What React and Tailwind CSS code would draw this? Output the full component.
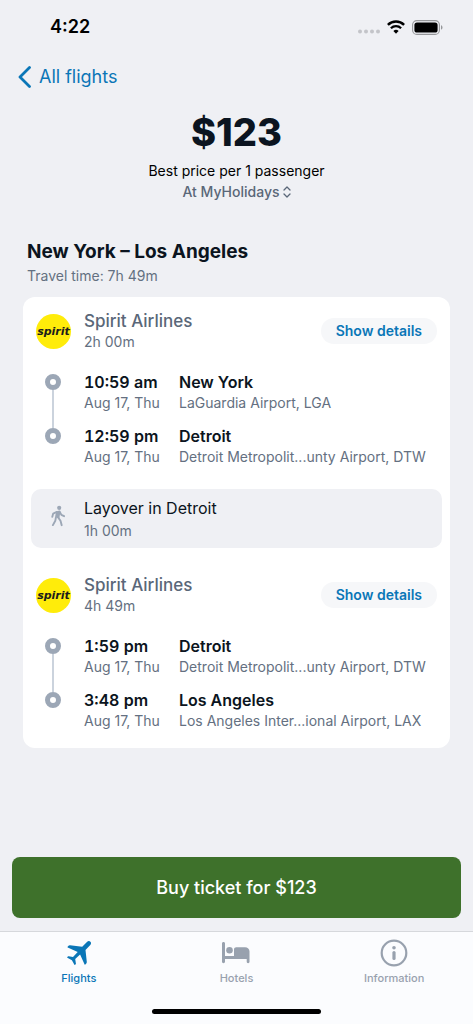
import React from 'react';

const SEGMENTS = [
    {
        airline: 'Spirit Airlines',
        duration: '2h 00m',
        stops: [
            { time: '10:59 am', date: 'Aug 17, Thu', city: 'New York', airport: 'LaGuardia Airport, LGA' },
            { time: '12:59 pm', date: 'Aug 17, Thu', city: 'Detroit', airport: 'Detroit Metropolit...unty Airport, DTW' }
        ]
    },
    {
        airline: 'Spirit Airlines',
        duration: '4h 49m',
        stops: [
            { time: '1:59 pm', date: 'Aug 17, Thu', city: 'Detroit', airport: 'Detroit Metropolit...unty Airport, DTW' },
            { time: '3:48 pm', date: 'Aug 17, Thu', city: 'Los Angeles', airport: 'Los Angeles Inter...ional Airport, LAX' }
        ]
    }
];

function PlaneIcon() {
    return (
        <svg viewBox="0 0 24 24" className="h-6 w-6" fill="currentColor" aria-hidden="true">
            <path d="M23.400.7c-.9-.9-2.300-.8-3.200.1l-5 4.900L3 4.300c-.6-.1-1.100.1-1.500.5l-.9.900c-.2.300-.2.600.1.800L10.700 11 6 16.100l-4.300-.8c-.3 0-.6 0-.8.2l-.6.600c-.2.300-.1.600.1.700l4.500 2.500 2.500 4.400c.2.300.5.300.7.100l.6-.6c.2-.2.300-.5.200-.8l-.7-4.300 4.900-4.700 4.500 10c.2.300.5.300.8.100l.9-.9c.4-.4.500-.9.500-1.500L18.500 8.900l4.800-5c.9-.9 1-2.300.1-3.200Z" />
        </svg>
    );
}

function BedIcon() {
    return (
        <svg viewBox="0 0 28 22" className="h-[22px] w-7" fill="currentColor" aria-hidden="true">
            <path d="M1.500 0C2.300 0 3 .6 3 1.400V14h9V7.500c0-1.400 1-2.300 2.300-2.300H23c2.600 0 4.500 1.800 4.500 4.400v10.200c0 .8-.6 1.400-1.400 1.400s-1.400-.6-1.400-1.400V17H3v2.800c0 .8-.7 1.400-1.500 1.400S0 20.600 0 19.800V1.400C0 .6.700 0 1.500 0Z" />
            <circle cx="7.500" cy="8.200" r="3.300" />
        </svg>
    );
}

function InfoIcon() {
    return (
        <svg viewBox="0 0 28 28" className="h-7 w-7" fill="none" aria-hidden="true">
            <circle cx="14" cy="14" r="12.300" stroke="currentColor" strokeWidth="2.200" />
            <circle cx="14" cy="8.700" r="1.800" fill="currentColor" />
            <path d="M14 13.500v6" stroke="currentColor" strokeWidth="3.200" strokeLinecap="round" />
        </svg>
    );
}

function WalkIcon() {
    return (
        <svg viewBox="0 0 14 22" className="h-[22px] w-[14px]" fill="none" stroke="currentColor" strokeLinecap="round" strokeLinejoin="round" aria-hidden="true">
            <circle cx="8.200" cy="2.800" r="2.100" fill="currentColor" stroke="none" />
            <path d="M5.800 7l2.800-.6-.9 6-2.700-.9Z" fill="currentColor" strokeWidth="1.600" />
            <path d="M5.800 6.900L2.200 8.600l-.9 3.200M8.800 7l1.600 2.900 2.700 1.300M4.900 12.500l-.6 3.300-2.400 4.300M7.100 12.400l2.400 3.300 1.200 4.500" strokeWidth="1.900" />
        </svg>
    );
}

function StatusBar() {
    return (
        <div className="flex h-[54px] items-center justify-between pr-[30px] pl-[50px] text-black">
            <span className="text-lg font-semibold">4:22</span>
            <div className="flex items-center">
                <svg viewBox="0 0 22 14" className="mr-[7px] h-[14px] w-[22px]" fill="#c3c4c9" aria-hidden="true">
                    <circle cx="2" cy="11.500" r="2" />
                    <circle cx="8" cy="11.500" r="2" />
                    <circle cx="14" cy="11.500" r="2" />
                    <circle cx="20" cy="11.500" r="2" />
                </svg>
                <svg viewBox="0 0 18 14" className="mr-[7px] h-[14px] w-[18px]" fill="none" stroke="currentColor" aria-hidden="true">
                    <path d="M.9 4.900a11.600 11.600 0 0 1 16.200 0" strokeWidth="2.500" />
                    <path d="M3.900 8.300a7.300 7.300 0 0 1 10.200 0" strokeWidth="2.300" />
                    <path d="M9 13.800l-2.600-2.700a3.700 3.700 0 0 1 5.200 0Z" fill="currentColor" stroke="none" />
                </svg>
                <svg viewBox="0 0 31 15" className="h-[15px] w-[31px]" aria-hidden="true">
                    <rect x=".6" y=".6" width="26.800" height="13.800" rx="4.200" fill="none" stroke="#96979a" strokeWidth="1.100" />
                    <rect x="2.400" y="2.400" width="23.200" height="10.200" rx="2.600" fill="#000" />
                    <path d="M29 5.300c1 .400 1.500 1.200 1.500 2.200s-.5 1.800-1.500 2.200Z" fill="#96979a" />
                </svg>
            </div>
        </div>
    );
}

function AirlineLogo() {
    return (
        <div className="flex h-[35px] w-[35px] items-center justify-center rounded-full bg-[#ffec0a]">
            <span className="font-['DejaVu_Sans',sans-serif] text-[11px] leading-none font-bold text-[#1c1c1c] italic">spirit</span>
        </div>
    );
}

function StopMarker({ last }) {
    return (
        <div className="flex w-[60px] flex-col items-center pt-[3px]">
            <span className="h-4 w-4 shrink-0 rounded-full border-[5px] border-[#9ca7b6]" />
            {!last && <span className="-mb-[3px] w-[2px] flex-1 bg-[#cbd3dd]" />}
        </div>
    );
}

function Segment({ segment }) {
    return (
        <section>
            <div className="grid grid-cols-[61px_1fr_auto] items-center pr-[13px]">
                <div className="pl-[13px]">
                    <AirlineLogo />
                </div>
                <div>
                    <h3 className="text-[17px] leading-[22px] font-medium text-[#5a6778]">{segment.airline}</h3>
                    <p className="text-sm leading-5 text-[#647081]">{segment.duration}</p>
                </div>
                <button type="button" className="h-[26px] rounded-full bg-[#f6f7f9] px-[15px] text-sm font-semibold text-[#0a76b7]">
                    Show details
                </button>
            </div>
            <ol className="mt-[19px]">
                {segment.stops.map((stop, i) => {
                    const last = i === segment.stops.length - 1;
                    return (
                        <li key={stop.time} className="grid grid-cols-[61px_95px_1fr] whitespace-nowrap">
                            <StopMarker last={last} />
                            <div className={last ? '' : 'pb-3'}>
                                <p className="text-base leading-[22px] font-semibold text-[#0b1420] tabular-nums">{stop.time}</p>
                                <p className="text-sm leading-5 text-[#647081]">{stop.date}</p>
                            </div>
                            <div>
                                <p className="text-base leading-[22px] font-semibold text-[#0b1420]">{stop.city}</p>
                                <p className="text-sm leading-5 text-[#647081]">{stop.airport}</p>
                            </div>
                        </li>
                    );
                })}
            </ol>
        </section>
    );
}

const TABS = [
    { label: 'Flights', Icon: PlaneIcon, active: true },
    { label: 'Hotels', Icon: BedIcon },
    { label: 'Information', Icon: InfoIcon }
];

export default function App() {
    return (
        <div className="flex min-h-screen flex-col bg-[#eff0f4] font-['Inter',sans-serif]">
            <StatusBar />

            <nav className="flex px-[18px] pt-[9px]">
                <a href="#flights" className="flex h-7 items-center gap-2 text-lg text-[#0a76b7]">
                    <svg viewBox="0 0 13 22" className="h-[22px] w-[13px]" fill="none" stroke="currentColor" strokeWidth="2.800" strokeLinecap="round" strokeLinejoin="round" aria-hidden="true">
                        <path d="M11.500 1.500L2 11l9.500 9.500" />
                    </svg>
                    All flights
                </a>
            </nav>

            <main className="px-[23px]">
                <header className="pt-[17px] text-center">
                    <h1 className="text-[38px] leading-[48px] font-extrabold text-[#0b1420]">$123</h1>
                    <p className="mt-1 text-sm leading-[22px] text-black">Best price per 1 passenger</p>
                    <button type="button" className="mx-auto flex h-5 items-center gap-[3px] text-sm font-medium text-[#5a6778]">
                        At MyHolidays
                        <svg viewBox="0 0 8 12" className="h-3 w-2" fill="none" stroke="currentColor" strokeWidth="1.300" strokeLinecap="round" strokeLinejoin="round" aria-hidden="true">
                            <path d="M1 4l3-3 3 3M1 8l3 3 3-3" />
                        </svg>
                    </button>
                </header>

                <div className="mt-[38px] px-1">
                    <h2 className="text-[19px] leading-6 font-bold text-[#0b1420]">New York – Los Angeles</h2>
                    <p className="text-sm leading-6 text-[#647081]">Travel time: 7h 49m</p>
                </div>

                <div className="mt-[9px] rounded-xl bg-white pt-[13px] pb-[17px]">
                    <Segment segment={SEGMENTS[0]} />
                    <div className="mx-2 mt-[22px] mb-[26px] grid grid-cols-[53px_1fr] items-center rounded-[10px] bg-[#eff0f4] py-[7px]">
                        <div className="flex justify-center pb-[6px] text-[#9ca7b6]">
                            <WalkIcon />
                        </div>
                        <div>
                            <p className="text-base leading-6 text-[#0b1420]">Layover in Detroit</p>
                            <p className="text-sm leading-[21px] text-[#647081]">1h 00m</p>
                        </div>
                    </div>
                    <Segment segment={SEGMENTS[1]} />
                </div>
            </main>

            <footer className="mt-auto">
                <div className="px-3 pb-[13px]">
                    <button type="button" className="h-[61px] w-full rounded-lg bg-[#3e712b] text-lg font-medium text-white">
                        Buy ticket for $123
                    </button>
                </div>
                <div className="border-t border-[#d6d8dc] bg-[#fbfcfe] pb-[10px]">
                    <nav className="grid h-[77px] grid-cols-3 items-start pt-[7px]">
                        {TABS.map(({ label, Icon, active }) => (
                            <a
                                key={label}
                                href={`#${label.toLowerCase()}`}
                                className={`flex flex-col items-center text-[11px] font-medium ${active ? 'text-[#0a76b7]' : 'text-[#98a1ae]'}`}
                            >
                                <span className="flex h-7 items-center">
                                    <Icon />
                                </span>
                                <span className="mt-[3px] leading-4">{label}</span>
                            </a>
                        ))}
                    </nav>
                    <div className="mx-auto h-[5px] w-[169px] rounded-full bg-black" />
                </div>
            </footer>
        </div>
    );
}
